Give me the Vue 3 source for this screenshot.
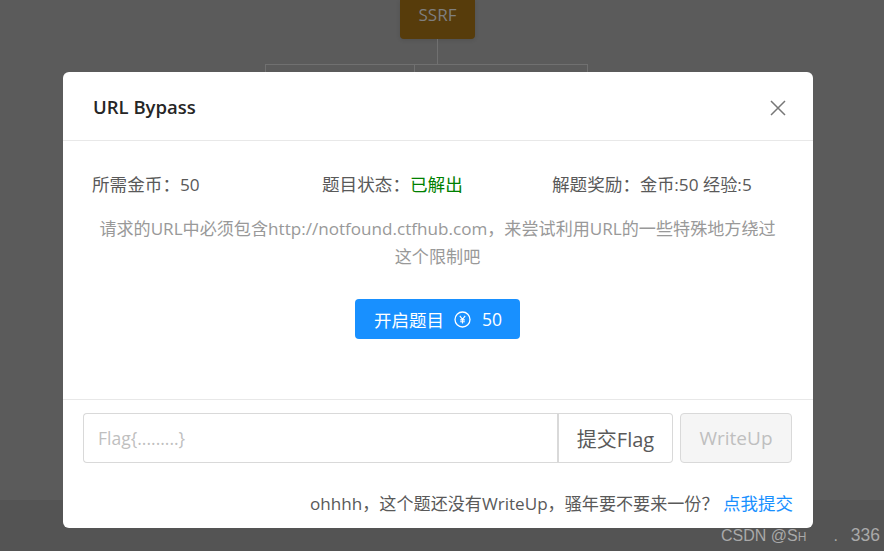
<script setup>
const stats = [
  { label: '所需金币\uFF1A', value: '50' },
  { label: '题目状态\uFF1A', value: '已解出', solved: true },
  { label: '解题奖励\uFF1A', value: '金币:50 经验:5' }
]
</script>

<template>
  <div class="page">
    <div class="canvas">
      <div class="node">SSRF</div>
      <div class="stem"></div>
      <div class="branches">
        <div class="branch wide"></div>
        <div class="branch wider"></div>
      </div>
    </div>
    <div class="band"></div>
    <div class="watermark">CSDN @S<span class="small">H</span><span class="gap">.</span><span class="num">336</span></div>

    <div class="modal">
      <header class="head">
        <h2>URL Bypass</h2>
        <svg class="close" width="16" height="16" viewBox="0 0 16 16" aria-hidden="true">
          <path d="M1 1L15 15M15 1L1 15" stroke="#777" stroke-width="1.5" fill="none" />
        </svg>
      </header>
      <section class="body">
        <div class="stats">
          <div v-for="s in stats" :key="s.label" class="stat">
            {{ s.label }}<span class="value" :class="{ solved: s.solved }">{{ s.value }}</span>
          </div>
        </div>
        <p class="desc">请求的URL中必须包含http://notfound.ctfhub.com&#xFF0C;来尝试利用URL的一些特殊地方绕过这个限制吧</p>
        <div class="action">
          <button class="start">
            <span>开启题目</span>
            <svg width="17" height="17" viewBox="0 0 17 17" aria-hidden="true">
              <circle cx="8.5" cy="8.5" r="7.5" fill="none" stroke="#fff" stroke-width="1.3" />
              <path d="M5.8 4.8L8.5 8.4L11.2 4.8M8.5 8.4V12.6M6.2 8.9H10.8M6.2 10.7H10.8" fill="none" stroke="#fff" stroke-width="1.1" />
            </svg>
            <span>50</span>
          </button>
        </div>
      </section>
      <footer class="foot">
        <div class="form">
          <input class="flag" placeholder="Flag{.........}" />
          <button class="submit">提交Flag</button>
          <button class="writeup" disabled>WriteUp</button>
        </div>
        <p class="hint">ohhhh&#xFF0C;这个题还没有WriteUp&#xFF0C;骚年要不要来一份&#xFF1F; <a>点我提交</a></p>
      </footer>
    </div>
  </div>
</template>

<style>
html, body { margin: 0; overflow: hidden; }
</style>

<style scoped>
.page {
  position: relative;
  width: 884px;
  height: 551px;
  overflow: hidden;
  background: #5b5b5b;
  font-family: "Open Sans", "Noto Sans CJK SC", sans-serif;
}
.canvas {
  display: flex;
  flex-direction: column;
  align-items: flex-start;
  padding-left: 265px;
  height: 500px;
  box-sizing: border-box;
}
.node {
  width: 75px;
  height: 39px;
  margin-left: 135px;
  background: #573c0b;
  border-radius: 0 0 4px 4px;
  color: #7f7f7f;
  font-size: 17px;
  line-height: 30px;
  text-align: center;
  box-shadow: 0 1px 4px rgba(0,0,0,.12);
}
.stem { width: 1px; height: 25px; background: #707070; margin-left: 172px; }
.branches { display: flex; }
.branch { height: 20px; box-sizing: border-box; border: 1px solid #707070; border-bottom: 0; }
.branch.wide { width: 149px; border-right: 0; }
.branch.wider { width: 174px; }
.band { position: absolute; left: 0; right: 0; top: 500px; bottom: 0; background: #545454; }
.watermark {
  position: absolute;
  left: 721px;
  top: 525px;
  color: #a9a9a9;
  font: 16px/20px "Liberation Sans", sans-serif;
  white-space: nowrap;
}
.small { font-size: 12px; }
.gap { margin: 0 13px 0 27px; }
.num { font-size: 17.5px; }
.modal {
  position: absolute;
  left: 63px;
  top: 72px;
  width: 750px;
  height: 456px;
  display: flex;
  flex-direction: column;
  background: #fff;
  border-radius: 6px;
}
.head {
  height: 68px;
  display: flex;
  align-items: center;
  justify-content: space-between;
  padding: 0 27px 0 30px;
  border-bottom: 1px solid #e8e8e8;
}
.head h2 {
  margin: 0;
  font-size: 18.5px;
  font-weight: 600;
  color: #262626;
}
.close { margin-top: 3px; }
.body {
  flex: 1;
  padding: 31px 30px 0 29px;
  color: #595959;
  font-size: 17.6px;
}
.stats { display: flex; }
.stat { width: 230px; line-height: 24px; white-space: nowrap; }
.value { font-size: 17.2px; }
.value.solved { color: #008000; font-size: 17.6px; }
.desc {
  margin: 18px 0 0;
  padding: 0 6px;
  color: #999;
  font-size: 17.1px;
  line-height: 28px;
  text-align: center;
}
.action { display: flex; justify-content: center; margin-top: 28px; }
.start {
  width: 165px;
  height: 40px;
  display: flex;
  align-items: center;
  justify-content: flex-start;
  gap: 10px;
  padding: 0 0 0 19px;
  border: 0;
  border-radius: 4px;
  background: #1890ff;
  color: #fff;
  font: inherit;
  font-size: 17.5px;
}
.start span:last-child { margin-left: 1px; }
.foot {
  height: 129px;
  box-sizing: border-box;
  border-top: 1px solid #e8e8e8;
  padding: 13px 21px 0 20px;
}
.form { display: flex; height: 50px; }
.flag {
  flex: 1;
  min-width: 0;
  box-sizing: border-box;
  height: 50px;
  padding: 0 14px;
  border: 1px solid #d9d9d9;
  border-right: 0;
  border-radius: 4px 0 0 4px;
  outline: 0;
  font: inherit;
  font-size: 17.5px;
}
.flag::placeholder { color: #bfbfbf; opacity: 1; }
.submit, .writeup {
  box-sizing: border-box;
  height: 50px;
  padding: 0;
  font: inherit;
  font-size: 19px;
  border: 1px solid #d9d9d9;
  border-radius: 0 4px 4px 0;
  background: #fff;
  color: #595959;
}
.submit { width: 116px; font-size: 20px; border-left: 2px solid #d9d9d9; }
.writeup {
  width: 112px;
  margin-left: 7px;
  border-radius: 4px;
  background: #f5f5f5;
  color: #bfbfbf;
}
.hint {
  margin: 28px -1px 0 0;
  text-align: right;
  color: #595959;
  font-size: 17.1px;
  line-height: 24px;
  white-space: nowrap;
}
.hint a { color: #1890ff; font-size: 17.5px; }
</style>
